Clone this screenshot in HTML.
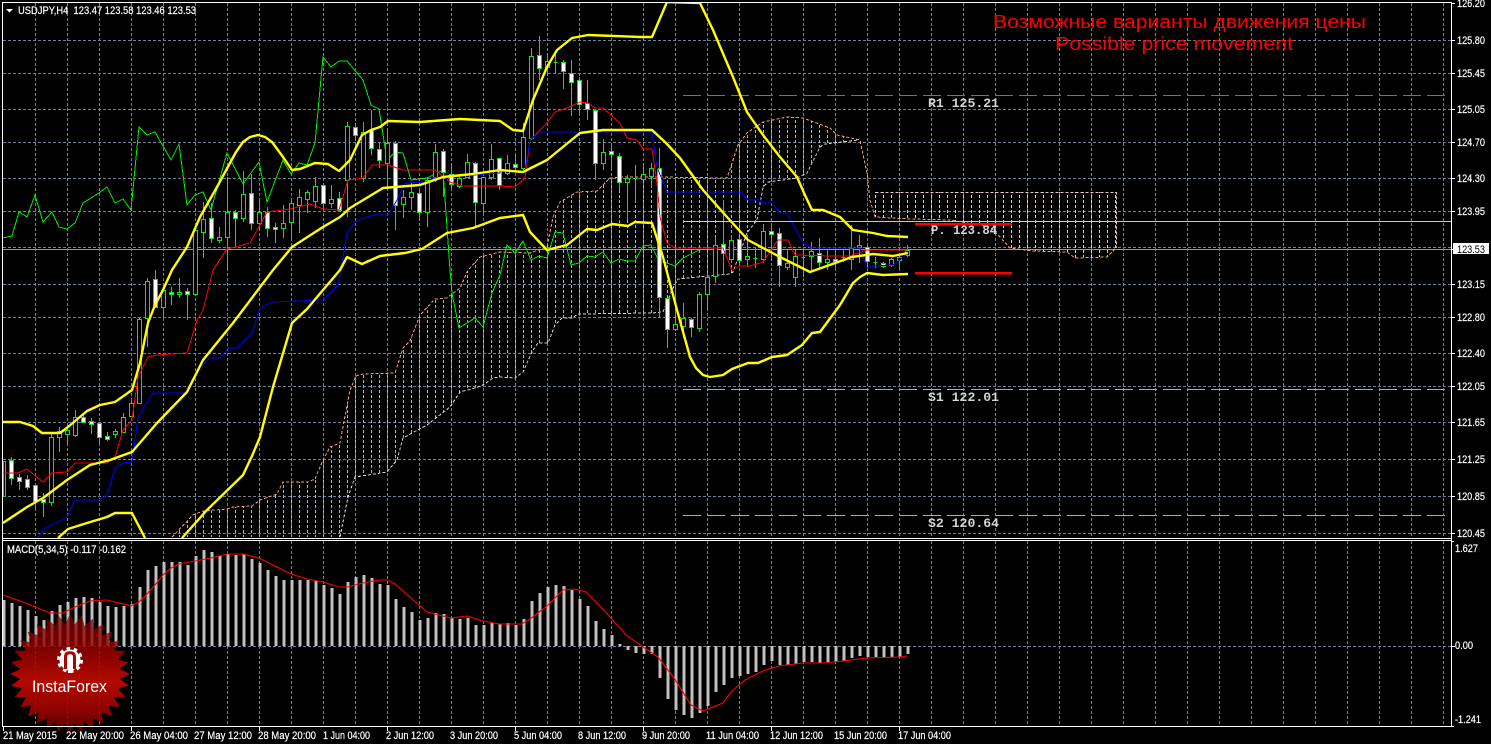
<!DOCTYPE html>
<html>
<head>
<meta charset="utf-8">
<style>
html,body{margin:0;padding:0;background:#000;width:1491px;height:744px;overflow:hidden}
svg{display:block}
text{font-family:"Liberation Sans",sans-serif;fill:#fff;font-size:11px;stroke:#fff;stroke-width:.2px}
.m{font-family:"Liberation Mono",monospace;font-weight:bold;font-size:13px;fill:#d4d4d4;stroke:none}
.n{stroke:none}
</style>
</head>
<body>
<svg width="1491" height="744" viewBox="0 0 1491 744" xmlns="http://www.w3.org/2000/svg">
<defs>
<pattern id="ho" patternUnits="userSpaceOnUse" x="3" y="0" width="8" height="5"><rect width="1" height="3" fill="#F4A460"/></pattern>
<pattern id="ht" patternUnits="userSpaceOnUse" x="3" y="0" width="8" height="5"><rect width="1" height="3" fill="#E0CDD0"/></pattern>
<clipPath id="main"><rect x="3" y="3" width="1448" height="535"/></clipPath>
<clipPath id="star">
<circle cx="70" cy="674" r="50"/>
<polygon points="-60,0 0,-28.7 60,0 0,28.7" transform="translate(70 674)"/>
<polygon points="-60,0 0,-28.7 60,0 0,28.7" transform="translate(70 674) rotate(11.25)"/>
<polygon points="-60,0 0,-28.7 60,0 0,28.7" transform="translate(70 674) rotate(22.5)"/>
<polygon points="-60,0 0,-28.7 60,0 0,28.7" transform="translate(70 674) rotate(33.75)"/>
<polygon points="-60,0 0,-28.7 60,0 0,28.7" transform="translate(70 674) rotate(45)"/>
<polygon points="-60,0 0,-28.7 60,0 0,28.7" transform="translate(70 674) rotate(56.25)"/>
<polygon points="-60,0 0,-28.7 60,0 0,28.7" transform="translate(70 674) rotate(67.5)"/>
<polygon points="-60,0 0,-28.7 60,0 0,28.7" transform="translate(70 674) rotate(78.75)"/>
<polygon points="-60,0 0,-28.7 60,0 0,28.7" transform="translate(70 674) rotate(90)"/>
<polygon points="-60,0 0,-28.7 60,0 0,28.7" transform="translate(70 674) rotate(101.25)"/>
<polygon points="-60,0 0,-28.7 60,0 0,28.7" transform="translate(70 674) rotate(112.5)"/>
<polygon points="-60,0 0,-28.7 60,0 0,28.7" transform="translate(70 674) rotate(123.75)"/>
<polygon points="-60,0 0,-28.7 60,0 0,28.7" transform="translate(70 674) rotate(135)"/>
<polygon points="-60,0 0,-28.7 60,0 0,28.7" transform="translate(70 674) rotate(146.25)"/>
<polygon points="-60,0 0,-28.7 60,0 0,28.7" transform="translate(70 674) rotate(157.5)"/>
<polygon points="-60,0 0,-28.7 60,0 0,28.7" transform="translate(70 674) rotate(168.75)"/>
</clipPath>
<linearGradient id="sg" x1="0" y1="0" x2="0" y2="1">
<stop offset="0" stop-color="#7a0000" stop-opacity=".72"/><stop offset=".27" stop-color="#940000" stop-opacity=".82"/><stop offset=".55" stop-color="#bb0a00" stop-opacity=".95"/><stop offset=".78" stop-color="#a00400" stop-opacity=".9"/><stop offset="1" stop-color="#5c0000" stop-opacity=".85"/>
</linearGradient>
</defs>
<rect width="1491" height="744" fill="#000"/>

<!-- grid -->
<g stroke="#708090" stroke-width="1" stroke-dasharray="3 2" fill="none" shape-rendering="crispEdges">
<path d="M3 40.5H1451M3 73.5H1451M3 109.5H1451M3 142.5H1451M3 178.5H1451M3 211.5H1451M3 247.5H1451M3 284.5H1451M3 317.5H1451M3 353.5H1451M3 386.5H1451M3 422.5H1451M3 459.5H1451M3 496.5H1451M3 533.5H1451M3 646.5H1451"/>
<path d="M35.5 3V538M67.5 3V538M99.5 3V538M131.5 3V538M163.5 3V538M195.5 3V538M227.5 3V538M259.5 3V538M291.5 3V538M323.5 3V538M355.5 3V538M387.5 3V538M419.5 3V538M451.5 3V538M483.5 3V538M515.5 3V538M547.5 3V538M579.5 3V538M611.5 3V538M643.5 3V538M675.5 3V538M707.5 3V538M739.5 3V538M771.5 3V538M803.5 3V538M835.5 3V538M867.5 3V538M899.5 3V538M931.5 3V538M963.5 3V538M995.5 3V538M1027.5 3V538M1059.5 3V538M1091.5 3V538M1123.5 3V538M1155.5 3V538M1187.5 3V538M1219.5 3V538M1251.5 3V538M1283.5 3V538M1315.5 3V538M1347.5 3V538M1379.5 3V538M1411.5 3V538M1443.5 3V538"/>
<path d="M35.5 541V726M67.5 541V726M99.5 541V726M131.5 541V726M163.5 541V726M195.5 541V726M227.5 541V726M259.5 541V726M291.5 541V726M323.5 541V726M355.5 541V726M387.5 541V726M419.5 541V726M451.5 541V726M483.5 541V726M515.5 541V726M547.5 541V726M579.5 541V726M611.5 541V726M643.5 541V726M675.5 541V726M707.5 541V726M739.5 541V726M771.5 541V726M803.5 541V726M835.5 541V726M867.5 541V726M899.5 541V726M931.5 541V726M963.5 541V726M995.5 541V726M1027.5 541V726M1059.5 541V726M1091.5 541V726M1123.5 541V726M1155.5 541V726M1187.5 541V726M1219.5 541V726M1251.5 541V726M1283.5 541V726M1315.5 541V726M1347.5 541V726M1379.5 541V726M1411.5 541V726M1443.5 541V726"/>
</g>
<path d="M3 249.5H1451" stroke="#9a9a9a" stroke-width="1" shape-rendering="crispEdges"/>

<g clip-path="url(#main)" shape-rendering="crispEdges">
<!-- cloud -->
<polygon fill="url(#ho)" points="172,537 193,515 203,511 227,509 233,507 252,506 260,500 277,494 283,482 308,482 315,479 323,460 330,447 340,443 350,390 356,376 363,374 395,373 403,348 410,341 420,315 435,299 447,298 460,288 468,270 480,257 500,252 530,253 547,247 553,217 560,202 577,192 597,191 610,178 623,177 657,177 727,178 738,145 747,133 763,122 787,117 803,118 830,128 837,135 860,140 858,140 825,144 820,147 807,173 797,178 768,182 763,187 757,220 747,233 733,272 730,274 678,279 672,290 663,312 652,313 578,314 572,318 562,318 555,325 548,343 538,343 533,350 523,372 515,378 502,378 500,377 493,378 483,385 475,388 460,392 450,407 427,425 403,438 397,460 387,472 355,477 348,497 340,537"/>
<polygon fill="url(#ht)" points="875,192 1116,192 1116,248 1107,257 1075,258 1067,252 1033,251 1010,248 1000,237 990,227 950,220 875,217"/>
<polyline fill="none" stroke="#F4A460" stroke-dasharray="3 2" points="172,537 193,515 203,511 227,509 233,507 252,506 260,500 277,494 283,482 308,482 315,479 323,460 330,447 340,443 350,390 356,376 363,374 395,373 403,348 410,341 420,315 435,299 447,298 460,288 468,270 480,257 500,252 530,253 547,247 553,217 560,202 577,192 597,191 610,178 623,177 657,177 727,178 738,145 747,133 763,122 787,117 803,118 830,128 837,135 860,140 862,150 867,173 870,200 875,217 910,219 950,220 990,227 1000,237 1010,248 1033,251 1067,252 1075,258 1107,257 1116,248"/>
<polyline fill="none" stroke="#E0CDD0" stroke-dasharray="3 2" points="340,537 348,497 355,477 387,472 397,460 403,438 427,425 450,407 460,392 475,388 483,385 493,378 500,377 515,378 523,372 533,350 538,343 548,343 555,325 562,318 572,318 578,314 652,313 663,312 672,290 678,279 730,274 733,272 747,233 757,220 763,187 768,182 797,178 807,173 820,147 825,144 858,140"/>
<path d="M875.5 192.5H1116.5V248" fill="none" stroke="#E0CDD0" stroke-dasharray="3 2"/>

<!-- levels -->
<path d="M683 95.5H1445" stroke="#D8501E" stroke-dasharray="18 6"/>
<path d="M683 389.5H1445" stroke="#C4A498" stroke-dasharray="18 6"/>
<path d="M683 515.5H1445" stroke="#C4A498" stroke-dasharray="18 6"/>

<!-- chikou -->
<polyline fill="none" stroke="#00EE00" points="3,238 12,236 19,212 27,217 35,195 43,222 52,212 59,227 67,229 75,223 83,203 99,193 107,187 115,203 123,199 131,210 139,127 147,135 155,132 171,160 179,144 187,205 195,195 203,192 211,210 227,153 243,184 259,162 267,202 283,160 291,174 299,163 307,165 315,143 323,57 331,67 339,61 347,61 363,80 371,105 379,109 387,160 395,152 403,153 411,180 427,178 443,170 450,270 452,293 459,328 475,318 483,327 492,293 500,275 507,245 515,253 523,241 531,260 539,256 547,258 555,232 563,233 571,265 579,263 587,256 595,257 603,252 611,263 619,259 627,261 635,261 643,246 651,245 659,261 667,263 675,266 683,258 699,250"/>

<!-- wicks -->
<path stroke="#00EE00" fill="none" d="M11.5 457V485M19.5 474V490M27.5 475V490M35.5 485V510M43.5 493V517M51.5 433V506M59.5 427V452M67.5 427V443M75.5 410V437M83.5 415V423M91.5 418V434M99.5 423V443M107.5 432V441M115.5 429V438M123.5 413V433M131.5 400V417M139.5 318V404M147.5 278V347M155.5 270V308M163.5 287V317M171.5 287V305M179.5 278V298M187.5 288V320M195.5 230V295M203.5 202V258M211.5 203V243M219.5 227V243M227.5 177V270M235.5 210V246M243.5 171V222M251.5 174V230M259.5 198V230M267.5 207V237M275.5 223V243M283.5 205V238M291.5 198V239M299.5 189V233M307.5 190V213M315.5 177V208M323.5 185V210M331.5 185V208M339.5 192V211M347.5 122V217M355.5 123V138M363.5 122V182M371.5 110V155M379.5 143V168M387.5 128V187M395.5 141V230M403.5 190V218M411.5 182V210M419.5 191V220M427.5 177V227M435.5 144V182M443.5 149V197M451.5 165V191M459.5 175V188M467.5 154V177M475.5 162V227M483.5 177V213M491.5 144V180M499.5 158V190M507.5 155V175M515.5 155V172M523.5 123V170M531.5 48V140M539.5 36V80M547.5 55V73M555.5 52V74M563.5 60V89M571.5 60V116M579.5 77V113M587.5 80V120M595.5 110V180M603.5 139V170M611.5 143V170M619.5 153V190M627.5 175V220M635.5 165V202M643.5 165V180M651.5 163V188M659.5 148V317M667.5 298V348M675.5 283V330M683.5 303V338M691.5 318V337M699.5 292V332M707.5 275V310M715.5 237V283M723.5 200V275M731.5 235V263M739.5 237V265M747.5 235V267M755.5 247V268M763.5 224V263M771.5 224V260M779.5 228V287M787.5 250V270M795.5 250V287M803.5 250V277M811.5 242V270M819.5 238V270M827.5 250V270M835.5 250V268M843.5 250V262M851.5 225V270M859.5 235V263M867.5 245V268M875.5 257V268M883.5 262V268M891.5 258V267M899.5 255V268M907.5 245V257"/>

<!-- hollow (bull) bodies -->
<path fill="#000" stroke="#00EE00" d="M3.5 461.5h2v35h-2zM49.5 437.5h4v65h-4zM57.5 431.5h4v6h-4zM65.5 430.5h4v4h-4zM73.5 417.5h4v18h-4zM113.5 431.5h4v3h-4zM121.5 417.5h4v15h-4zM129.5 403.5h4v13h-4zM137.5 319.5h4v84h-4zM145.5 281.5h4v37h-4zM161.5 290.5h4v17h-4zM177.5 292.5h4v2h-4zM193.5 230.5h4v64h-4zM201.5 219.5h4v13h-4zM217.5 237.5h4v3h-4zM225.5 212.5h4v25h-4zM241.5 194.5h4v24h-4zM257.5 212.5h4v11h-4zM281.5 223.5h4v5h-4zM289.5 203.5h4v19h-4zM297.5 197.5h4v8h-4zM305.5 192.5h4v7h-4zM313.5 186.5h4v15h-4zM329.5 199.5h4v4h-4zM345.5 126.5h4v54h-4zM361.5 132.5h4v46h-4zM385.5 143.5h4v20h-4zM401.5 197.5h4v7h-4zM409.5 192.5h4v5h-4zM425.5 180.5h4v32h-4zM433.5 152.5h4v25h-4zM457.5 178.5h4v8h-4zM465.5 162.5h4v15h-4zM481.5 177.5h4v26h-4zM489.5 159.5h4v18h-4zM505.5 163.5h4v10h-4zM521.5 137.5h4v31h-4zM529.5 56.5h4v82h-4zM545.5 61.5h4v6h-4zM553.5 62.5h4v0h-4zM601.5 152.5h4v11h-4zM625.5 178.5h4v4h-4zM633.5 178.5h4v0h-4zM641.5 174.5h4v5h-4zM649.5 168.5h4v8h-4zM673.5 324.5h4v5h-4zM681.5 318.5h4v8h-4zM697.5 294.5h4v34h-4zM705.5 277.5h4v17h-4zM713.5 245.5h4v31h-4zM729.5 240.5h4v19h-4zM745.5 256.5h4v3h-4zM753.5 258.5h4v0h-4zM761.5 231.5h4v28h-4zM785.5 263.5h4v4h-4zM793.5 256.5h4v21h-4zM801.5 257.5h4v0h-4zM809.5 251.5h4v5h-4zM825.5 259.5h4v3h-4zM841.5 257.5h4v0h-4zM849.5 248.5h4v11h-4zM857.5 245.5h4v2h-4zM873.5 262.5h4v0h-4zM889.5 259.5h4v6h-4zM897.5 257.5h4v3h-4zM905.5 250.5h4v5h-4z"/>

<!-- filled (bear) bodies -->
<path fill="#fff" stroke="#00EE00" d="M9.5 460.5h4v18h-4zM17.5 477.5h4v4h-4zM25.5 479.5h4v8h-4zM33.5 485.5h4v16h-4zM41.5 499.5h4v3h-4zM81.5 417.5h4v5h-4zM89.5 421.5h4v3h-4zM97.5 423.5h4v14h-4zM105.5 436.5h4v3h-4zM153.5 279.5h4v28h-4zM169.5 292.5h4v2h-4zM185.5 291.5h4v3h-4zM209.5 218.5h4v20h-4zM233.5 212.5h4v6h-4zM249.5 193.5h4v30h-4zM265.5 212.5h4v16h-4zM273.5 227.5h4v2h-4zM321.5 185.5h4v18h-4zM337.5 198.5h4v12h-4zM353.5 127.5h4v8h-4zM369.5 130.5h4v18h-4zM377.5 149.5h4v11h-4zM393.5 143.5h4v62h-4zM417.5 193.5h4v19h-4zM441.5 151.5h4v21h-4zM449.5 174.5h4v10h-4zM473.5 163.5h4v39h-4zM497.5 158.5h4v27h-4zM513.5 164.5h4v3h-4zM537.5 55.5h4v13h-4zM561.5 62.5h4v9h-4zM569.5 73.5h4v9h-4zM577.5 80.5h4v24h-4zM585.5 103.5h4v6h-4zM593.5 110.5h4v53h-4zM609.5 151.5h4v3h-4zM617.5 156.5h4v26h-4zM657.5 168.5h4v129h-4zM665.5 298.5h4v31h-4zM689.5 319.5h4v8h-4zM721.5 244.5h4v9h-4zM737.5 239.5h4v21h-4zM769.5 231.5h4v3h-4zM777.5 233.5h4v32h-4zM817.5 253.5h4v9h-4zM833.5 259.5h4v2h-4zM865.5 247.5h4v14h-4zM881.5 263.5h4v3h-4z"/>

<!-- tenkan -->
<polyline fill="none" stroke="#FF0000" points="3,473 18,473 27,469 43,482 52,473 67,472 75,463 107,463 115,457 123,430 132,420 138,377 148,357 157,355 187,353 197,320 203,310 213,270 227,249 250,243 267,212 290,209 310,204 323,209 339,210 348,180 363,178 372,165 388,165 403,170 435,170 450,182 462,186 500,186 515,187 525,178 530,140 547,123 555,112 567,108 580,102 588,103 595,108 603,108 620,123 627,138 637,140 643,149 652,149 657,183 660,217 667,243 675,248 723,248 732,270 740,266 750,266 763,262 778,240 788,240 795,255 833,256 850,256 867,250 907,250"/>
<!-- kijun -->
<polyline fill="none" stroke="#0000FF" points="38,537 45,528 67,517 75,500 99,500 107,495 115,468 123,463 132,462 138,417 153,393 187,393 197,370 210,358 220,358 228,348 237,348 252,333 260,308 272,302 323,300 338,285 341,270 347,233 355,222 372,215 388,215 397,200 405,183 428,182 433,178 500,173 500,171 525,171 530,140 540,132 593,132 652,132 657,167 667,192 740,192 748,200 760,200 763,203 772,203 780,213 787,213 803,243 812,248 860,248 867,268 875,266 893,265 902,258 908,253"/>
</g>

<!-- bollinger -->
<g clip-path="url(#main)" fill="none" stroke="#FFFF00" stroke-width="2.4" stroke-linejoin="round">
<polyline points="3,422 20,422 33,426 42,433 60,433 68,427 87,411 100,405 115,402 132,390 140,363 148,323 155,305 163,290 172,270 187,247 200,217 217,187 230,163 236,152 243,142 250,137 258,135 265,137 272,142 283,157 292,170 300,169 315,163 328,164 339,171 350,160 362,135 371,130 380,127 388,121 420,122 460,119 500,121 513,130 523,131 533,100 547,67 557,50 572,38 588,35 640,37 652,37 667,2 700,3 713,30 733,77 747,112 763,135 780,157 797,177 804,193 812,210 823,210 840,217 853,230 873,233 887,236 908,237"/>
<polyline points="3,523 27,507 43,498 67,480 90,465 110,460 132,452 157,423 187,392 203,360 233,323 273,270 292,247 323,227 340,217 350,208 383,188 420,185 443,177 473,174 500,170 523,172 547,160 580,133 603,130 633,130 652,130 666,143 680,158 703,190 727,217 748,240 780,257 810,272 852,257 873,254 893,256 908,253"/>
<polyline points="58,538 68,529 87,523 107,517 115,513 132,513 145,538"/>
<polyline points="182,538 207,510 243,475 252,456 260,437 273,387 292,323 307,309 323,290 340,270 347,257 362,264 380,256 405,253 422,249 447,233 473,228 500,218 523,215 530,232 547,250 567,245 587,229 597,230 612,224 628,226 635,222 652,223 663,257 677,310 690,357 696,368 703,375 710,377 723,375 732,369 748,363 758,363 772,357 787,355 802,345 812,333 820,332 840,305 853,283 860,277 867,273 883,275 908,274"/>
</g>

<!-- pivot -->
<g shape-rendering="crispEdges">
<path d="M683 221.5H1451" stroke="#FFD700"/>
<rect x="915" y="223" width="97" height="2.5" fill="#FF0000"/>
<rect x="915" y="272" width="97" height="2.5" fill="#FF0000"/>
</g>

<!-- level labels -->
<text class="m" x="928" y="107" textLength="71" lengthAdjust="spacingAndGlyphs">R1 125.21</text>
<text class="m" x="931" y="234" textLength="66" lengthAdjust="spacingAndGlyphs">P. 123.84</text>
<text class="m" x="928" y="401" textLength="71" lengthAdjust="spacingAndGlyphs">S1 122.01</text>
<text class="m" x="928" y="527" textLength="71" lengthAdjust="spacingAndGlyphs">S2 120.64</text>

<!-- titles -->
<text class="n" x="993" y="28" style="font-size:18.5px;fill:#FF0000" textLength="373" lengthAdjust="spacingAndGlyphs">Возможные варианты движения цены</text>
<text class="n" x="1055" y="50" style="font-size:18.5px;fill:#FF0000" textLength="238" lengthAdjust="spacingAndGlyphs">Possible price movement</text>

<!-- MACD bars -->
<path stroke="#C0C0C0" stroke-width="3" fill="none" shape-rendering="crispEdges" d="M4 600V646M12 603V646M20 606V646M28 610V646M36 616V646M44 620V646M52 611V646M60 605V646M68 602V646M76 598V646M84 597V646M92 598V646M100 602V646M108 606V646M116 607V646M124 606V646M132 604V646M140 587V646M148 570V646M156 566V646M164 562V646M172 562V646M180 562V646M188 565V646M196 556V646M204 550V646M212 552V646M220 556V646M228 554V646M236 555V646M244 554V646M252 559V646M260 563V646M268 570V646M276 576V646M284 580V646M292 580V646M300 580V646M308 580V646M316 581V646M324 585V646M332 588V646M340 594V646M348 582V646M356 577V646M364 575V646M372 578V646M380 584V646M388 585V646M396 599V646M404 607V646M412 612V646M420 620V646M428 618V646M436 613V646M444 614V646M452 618V646M460 619V646M468 618V646M476 625V646M484 625V646M492 623V646M500 624V646M508 623V646M516 625V646M524 619V646M532 601V646M540 593V646M548 587V646M556 585V646M564 586V646M572 590V646M580 599V646M588 606V646M596 621V646M604 629V646M612 635V646M620 644V646M628 646V650M636 646V653M644 646V654M652 646V654M660 646V678M668 646V699M676 646V710M684 646V715M692 646V718M700 646V713M708 646V706M716 646V692M724 646V685M732 646V678M740 646V676M748 646V674M756 646V672M764 646V665M772 646V661M780 646V665M788 646V665M796 646V664M804 646V662M812 646V662M820 646V663M828 646V662M836 646V662M844 646V661M852 646V658M860 646V656M868 646V657M876 646V657M884 646V658M892 646V657M900 646V657M908 646V654"/>
<!-- MACD signal -->
<polyline fill="none" stroke="#FF0000" stroke-width="1.1" points="3,595 20,601 35,607 50,613 63,613 75,607 90,601 107,600 131,606 139,602 147,594 155,585 163,575 171,568 179,564 195,561 211,558 227,554 243,554 259,558 275,566 291,574 307,579 323,582 339,587 347,587 363,583 379,580 387,580 395,584 411,598 427,612 443,616 451,618 467,616 483,621 499,624 507,624 522,624 530,619 546,607 563,590 574,589 586,592 598,604 610,617 626,635 643,647 658,657 674,678 691,705 703,711 723,703 731,692 745,680 763,671 779,666 803,663 823,663 843,661 867,658 899,657 907,656"/>

<!-- logo -->
<rect x="0" y="612" width="140" height="124" fill="url(#sg)" clip-path="url(#star)"/>
<circle cx="70" cy="660" r="11.5" fill="none" stroke="#fff" stroke-width="3" stroke-dasharray="3.6 3.6"/>
<circle cx="70" cy="660" r="10.5" fill="#fff"/>
<path d="M65.5 669V657Q65.5 652.8 70 652.8T74.5 657V669" fill="none" stroke="#A80400" stroke-width="3"/>
<rect x="68" y="657" width="4" height="16" fill="#fff"/>
<text class="n" x="32" y="692" style="font-size:16.5px" textLength="75" lengthAdjust="spacingAndGlyphs">InstaForex</text>

<!-- frames -->
<g shape-rendering="crispEdges" fill="none" stroke="#fff">
<path d="M2.5 727V2.5H1451.5V727"/>
<path d="M2 538.5H1452M2 540.5H1452M2 726.5H1452"/>
<path d="M1452 3.5h3M1452 40.5h3M1452 73.5h3M1452 109.5h3M1452 142.5h3M1452 178.5h3M1452 211.5h3M1452 284.5h3M1452 317.5h3M1452 353.5h3M1452 386.5h3M1452 422.5h3M1452 459.5h3M1452 496.5h3M1452 533.5h3M1452 646.5h3M1452 541.5h2M1452 726.5h2"/>
<path d="M3.5 727v4M131.5 727v4M259.5 727v4M387.5 727v4M515.5 727v4M643.5 727v4M771.5 727v4M899.5 727v4"/>
</g>

<!-- header -->
<polygon points="6,9 13,9 9.5,12.5" fill="#fff"/>
<text x="18" y="14" textLength="178" lengthAdjust="spacingAndGlyphs" xml:space="preserve">USDJPY,H4  123.47 123.58 123.46 123.53</text>
<text x="7" y="553" textLength="119" lengthAdjust="spacingAndGlyphs">MACD(5,34,5) -0.117 -0.162</text>

<!-- right axis -->
<text x="1457" y="7" textLength="28" lengthAdjust="spacingAndGlyphs">126.20</text>
<text x="1457" y="44" textLength="28" lengthAdjust="spacingAndGlyphs">125.80</text>
<text x="1457" y="77" textLength="28" lengthAdjust="spacingAndGlyphs">125.45</text>
<text x="1457" y="113" textLength="28" lengthAdjust="spacingAndGlyphs">125.05</text>
<text x="1457" y="146" textLength="28" lengthAdjust="spacingAndGlyphs">124.70</text>
<text x="1457" y="182" textLength="28" lengthAdjust="spacingAndGlyphs">124.30</text>
<text x="1457" y="215" textLength="28" lengthAdjust="spacingAndGlyphs">123.95</text>
<rect x="1453" y="243" width="36" height="11" fill="#fff"/>
<path d="M1452 249.5h2" stroke="#fff" shape-rendering="crispEdges"/>
<text class="n" x="1457" y="253" style="fill:#000" textLength="28" lengthAdjust="spacingAndGlyphs">123.53</text>
<text x="1457" y="288" textLength="28" lengthAdjust="spacingAndGlyphs">123.15</text>
<text x="1457" y="321" textLength="28" lengthAdjust="spacingAndGlyphs">122.80</text>
<text x="1457" y="357" textLength="28" lengthAdjust="spacingAndGlyphs">122.40</text>
<text x="1457" y="390" textLength="28" lengthAdjust="spacingAndGlyphs">122.05</text>
<text x="1457" y="426" textLength="28" lengthAdjust="spacingAndGlyphs">121.65</text>
<text x="1457" y="463" textLength="28" lengthAdjust="spacingAndGlyphs">121.25</text>
<text x="1457" y="500" textLength="28" lengthAdjust="spacingAndGlyphs">120.85</text>
<text x="1457" y="537" textLength="28" lengthAdjust="spacingAndGlyphs">120.45</text>
<text x="1455" y="552" textLength="23" lengthAdjust="spacingAndGlyphs">1.627</text>
<text x="1455" y="649" textLength="18" lengthAdjust="spacingAndGlyphs">0.00</text>
<text x="1455" y="723" textLength="26" lengthAdjust="spacingAndGlyphs">-1.241</text>

<!-- bottom axis -->
<text x="3" y="739" textLength="54" lengthAdjust="spacingAndGlyphs">21 May 2015</text>
<text x="66" y="739" textLength="58" lengthAdjust="spacingAndGlyphs">22 May 20:00</text>
<text x="130" y="739" textLength="58" lengthAdjust="spacingAndGlyphs">26 May 04:00</text>
<text x="194" y="739" textLength="58" lengthAdjust="spacingAndGlyphs">27 May 12:00</text>
<text x="258" y="739" textLength="58" lengthAdjust="spacingAndGlyphs">28 May 20:00</text>
<text x="323" y="739" textLength="47" lengthAdjust="spacingAndGlyphs">1 Jun 04:00</text>
<text x="386" y="739" textLength="48" lengthAdjust="spacingAndGlyphs">2 Jun 12:00</text>
<text x="450" y="739" textLength="48" lengthAdjust="spacingAndGlyphs">3 Jun 20:00</text>
<text x="514" y="739" textLength="48" lengthAdjust="spacingAndGlyphs">5 Jun 04:00</text>
<text x="578" y="739" textLength="48" lengthAdjust="spacingAndGlyphs">8 Jun 12:00</text>
<text x="642" y="739" textLength="48" lengthAdjust="spacingAndGlyphs">9 Jun 20:00</text>
<text x="706" y="739" textLength="53" lengthAdjust="spacingAndGlyphs">11 Jun 04:00</text>
<text x="770" y="739" textLength="53" lengthAdjust="spacingAndGlyphs">12 Jun 12:00</text>
<text x="834" y="739" textLength="53" lengthAdjust="spacingAndGlyphs">15 Jun 20:00</text>
<text x="898" y="739" textLength="53" lengthAdjust="spacingAndGlyphs">17 Jun 04:00</text>
</svg>
</body>
</html>
